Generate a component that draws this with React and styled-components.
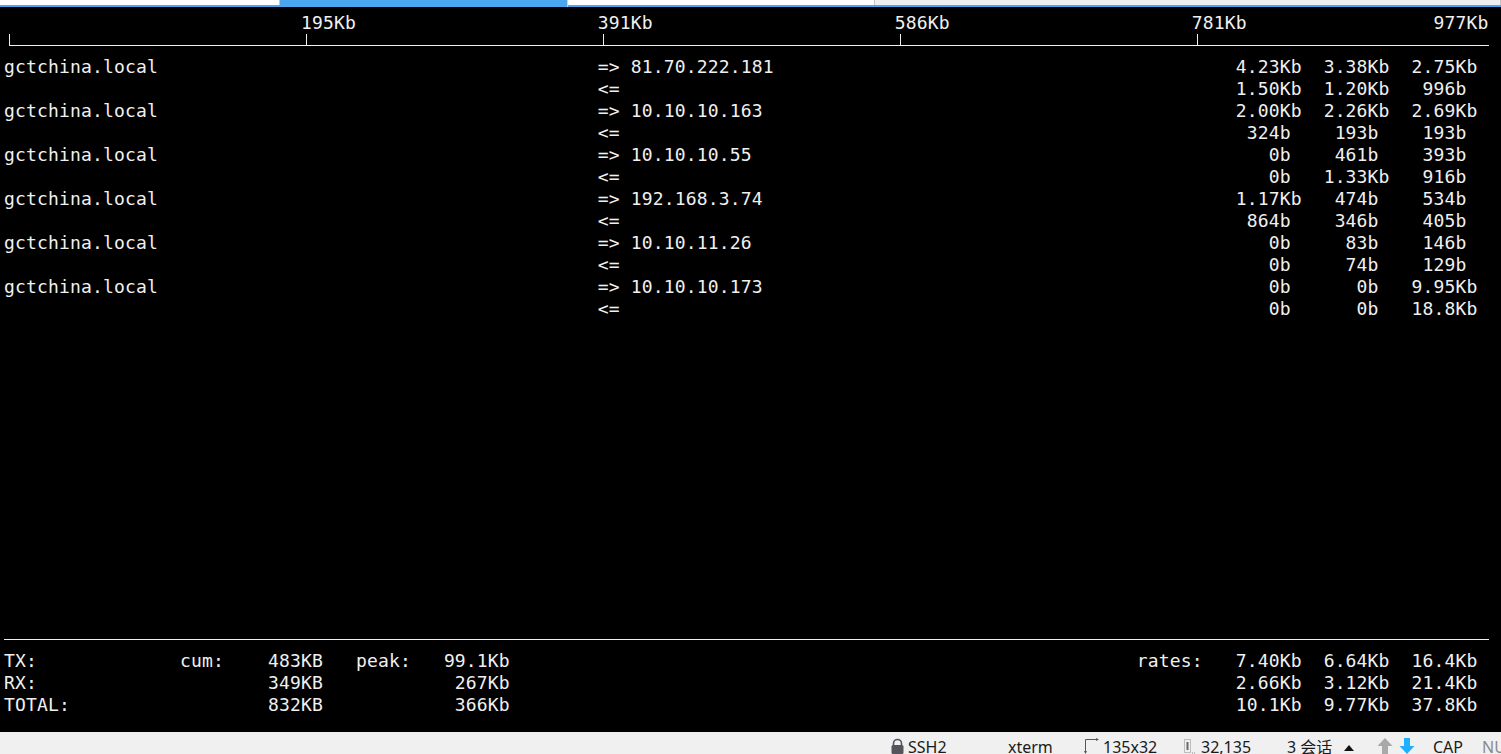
import React from "react";
import styled, { createGlobalStyle } from "styled-components";

const Global = createGlobalStyle`
  html, body { margin: 0; padding: 0; background: #000; }
  #root { width: 1501px; height: 754px; overflow: hidden; }
`;

const Page = styled.div`
  width: 1501px;
  height: 754px;
  display: flex;
  flex-direction: column;
  overflow: hidden;
  background: #000;
`;

const TabBar = styled.div`
  display: flex;
  height: 7px;
  flex: none;
  background: #4aa6ee;
`;

const Tab = styled.div`
  width: ${(p) => p.$w}px;
  flex: ${(p) => (p.$grow ? 1 : "none")};
  height: ${(p) => (p.$active ? 7 : 5)}px;
  background: ${(p) => (p.$active ? "#4aa6ee" : p.$bg || "#fff")};
  border-right: 1px solid ${(p) => (p.$active ? "#c9d3dc" : "#c4c4c4")};
  box-sizing: border-box;
`;

const Terminal = styled.div`
  flex: 1;
  padding: 5px 0 0 4px;
  background: #000;
  color: #f0f0f0;
  font-family: "DejaVu Sans Mono", monospace;
  font-size: 18px;
  letter-spacing: 0.16px;
`;

const Line = styled.div`
  height: 22px;
  line-height: 22px;
  white-space: pre;
`;

const Axis = styled.div`
  display: flex;
  box-sizing: border-box;
  height: 12px;
  width: 1480px;
  margin: 0 0 10px 5px;
  border-bottom: 1px solid #f0f0f0;
`;

const AxisSegment = styled.div`
  width: 297px;
  box-sizing: border-box;
  flex: none;
  border-left: 1px solid #f0f0f0;
`;

const Spacer = styled.div`
  height: ${(p) => p.$rows * 22}px;
`;

const Rule = styled.div`
  height: 22px;
  display: flex;
  align-items: center;
  width: 1485px;
  &::before {
    content: "";
    display: block;
    width: 100%;
    height: 1px;
    background: #f0f0f0;
  }
`;

const StatusBar = styled.div`
  flex: none;
  height: 22px;
  background: #f0f0f0;
  display: flex;
  align-items: flex-start;
  padding-left: 890px;
  overflow: hidden;
  color: #1a1a1a;
  font-family: "Noto Sans", "Noto Sans CJK SC", sans-serif;
  font-size: 16px;
  line-height: 22px;
`;

const StatusItem = styled.div`
  flex: none;
  display: flex;
  align-items: flex-start;
  width: ${(p) => p.$w}px;
  white-space: nowrap;
  color: ${(p) => p.$color || "inherit"};
  padding-top: 4px;
`;

const StatusIcon = styled.svg`
  flex: none;
  display: block;
  margin-top: ${(p) => p.$top || 0}px;
  margin-right: ${(p) => p.$gap || 0}px;
`;

const pad = (s, n) => s.padEnd(n, " ");
const rpad = (s, n) => s.padStart(n, " ");

const flows = [
  ["81.70.222.181", ["4.23Kb", "3.38Kb", "2.75Kb"], ["1.50Kb", "1.20Kb", "996b"]],
  ["10.10.10.163", ["2.00Kb", "2.26Kb", "2.69Kb"], ["324b", "193b", "193b"]],
  ["10.10.10.55", ["0b", "461b", "393b"], ["0b", "1.33Kb", "916b"]],
  ["192.168.3.74", ["1.17Kb", "474b", "534b"], ["864b", "346b", "405b"]],
  ["10.10.11.26", ["0b", "83b", "146b"], ["0b", "74b", "129b"]],
  ["10.10.10.173", ["0b", "0b", "9.95Kb"], ["0b", "0b", "18.8Kb"]],
];

const cell = (v) => rpad(v.endsWith("Kb") ? v : v + " ", 6);
const rates = (r) => r.map(cell).join("  ");

const scale =
  pad("", 27) + pad("195Kb", 27) + pad("391Kb", 27) + pad("586Kb", 27) + pad("781Kb", 22) + "977Kb";

const rows = flows.flatMap(([ip, tx, rx]) => [
  pad("gctchina.local", 54) + "=> " + pad(ip, 55) + rates(tx),
  pad("", 54) + "<= " + pad("", 55) + rates(rx),
]);

const totals = [
  pad("TX:", 16) + pad("cum:", 8) + rpad("483KB", 5) + "   " + pad("peak:", 8) + rpad("99.1Kb", 6) + pad("", 57) + pad("rates:", 9) + rates(["7.40Kb", "6.64Kb", "16.4Kb"]),
  pad("RX:", 24) + rpad("349KB", 5) + pad("", 11) + rpad("267Kb", 6) + pad("", 66) + rates(["2.66Kb", "3.12Kb", "21.4Kb"]),
  pad("TOTAL:", 24) + rpad("832KB", 5) + pad("", 11) + rpad("366Kb", 6) + pad("", 66) + rates(["10.1Kb", "9.77Kb", "37.8Kb"]),
];

const Lock = () => (
  <StatusIcon $top={2} $gap={3} width="15" height="16" viewBox="0 0 15 16">
    <path d="M3.5 8V5.5a4 4 0 0 1 8 0V8" fill="none" stroke="#55565c" strokeWidth="1.6" />
    <rect x="1.5" y="7" width="12" height="9" rx="1.5" fill="#55565c" />
  </StatusIcon>
);

const SizeIcon = () => (
  <StatusIcon $top={1} $gap={4} width="16" height="17" viewBox="0 0 16 17">
    <path d="M2.5 2.5H15M2.5 2.5V16" fill="none" stroke="#55565c" strokeWidth="1" />
    <path d="M13 1l3 1.5-3 1.5zM1 14l1.5 3 1.5-3z" fill="#55565c" />
  </StatusIcon>
);

const PosIcon = () => (
  <StatusIcon $top={3} $gap={6} width="12" height="15" viewBox="0 0 12 15">
    <path d="M1.5 0.5h6v13h-6z" fill="none" stroke="#8a8a8a" strokeWidth="1" strokeDasharray="1 1" />
    <path d="M3.5 3h2v8h-2z" fill="#6a6a6a" />
    <path d="M9 14h3" stroke="#8a8a8a" strokeWidth="1" strokeDasharray="1 1" />
  </StatusIcon>
);

const Caret = () => (
  <StatusIcon $top={9} width="10" height="6" viewBox="0 0 10 6">
    <path d="M5 0l5 6H0z" fill="#111" />
  </StatusIcon>
);

const Arrow = ({ up, color }) => (
  <StatusIcon $top={2} width="16" height="16" viewBox="0 0 16 16">
    {up ? (
      <path d="M8 0l7.5 8H11v8H5V8H.5z" fill={color} />
    ) : (
      <path d="M5 0h6v8h4.5L8 16 .5 8H5z" fill={color} />
    )}
  </StatusIcon>
);

export default function App() {
  return (
    <Page>
      <Global />
      <TabBar>
        <Tab $w={280} />
        <Tab $w={288} $active />
        <Tab $w={307} />
        <Tab $grow $bg="#f0f0f0" />
      </TabBar>
      <Terminal>
        <Line>{scale}</Line>
        <Axis>
          <AxisSegment />
          <AxisSegment />
          <AxisSegment />
          <AxisSegment />
          <AxisSegment />
        </Axis>
        {rows.map((r, i) => (
          <Line key={i}>{r}</Line>
        ))}
        <Spacer $rows={14} />
        <Rule />
        {totals.map((r, i) => (
          <Line key={i}>{r}</Line>
        ))}
      </Terminal>
      <StatusBar>
        <StatusItem $w={118}><Lock />SSH2</StatusItem>
        <StatusItem $w={75}>xterm</StatusItem>
        <StatusItem $w={100}><SizeIcon />135x32</StatusItem>
        <StatusItem $w={104}><PosIcon />32,135</StatusItem>
        <StatusItem $w={57}>3 会话</StatusItem>
        <StatusItem $w={33}><Caret /></StatusItem>
        <StatusItem $w={22}><Arrow up color="#a9a9a9" /></StatusItem>
        <StatusItem $w={34}><Arrow color="#1eb0ff" /></StatusItem>
        <StatusItem $w={49}>CAP</StatusItem>
        <StatusItem $w={30} $color="#8a8a8a">NUM</StatusItem>
      </StatusBar>
    </Page>
  );
}
